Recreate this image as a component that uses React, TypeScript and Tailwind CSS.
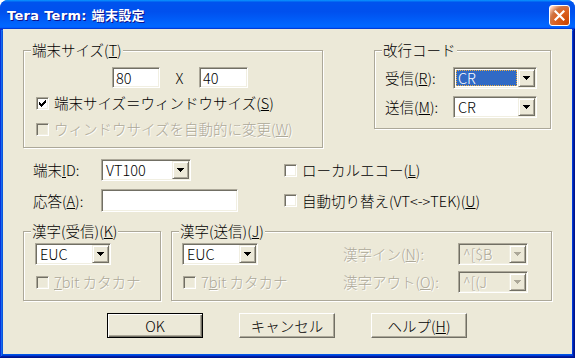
import type { ReactNode } from "react"

const sunken =
  "border border-t-[#aca899] border-l-[#aca899] border-r-white border-b-white shadow-[inset_1px_1px_0_#716f64,inset_-1px_-1px_0_#f1efe2]"
const raised =
  "border border-t-[#f1efe2] border-l-[#f1efe2] border-r-[#716f64] border-b-[#716f64] shadow-[inset_1px_1px_0_#fff,inset_-1px_-1px_0_#aca899]"
const dim = "text-[#aca899] [text-shadow:1px_1px_0_#fff]"

function Combo({
  value,
  width,
  selected,
  disabled,
}: {
  value: string
  width: string
  selected?: boolean
  disabled?: boolean
}) {
  return (
    <div className={`flex h-[22px] p-[1px] ${width} ${sunken} ${disabled ? "bg-[#ece9d8]" : "bg-white"}`}>
      <div className="flex flex-1 p-[1px]">
        {selected ? (
          <span className="flex flex-1 items-center border border-dotted border-[#f0b040] bg-[#316ac5] pl-[1px] text-white">
            {value}
          </span>
        ) : (
          <span className={`flex flex-1 items-center pl-[2px] ${disabled ? dim : ""}`}>{value}</span>
        )}
      </div>
      <div className={`flex w-[17px] items-center justify-center bg-[#ece9d8] ${raised}`}>
        <svg width="7" height="4" viewBox="0 0 7 4" shapeRendering="crispEdges">
          <path d="M0 0h7v1h-7zM1 1h5v1h-5zM2 2h3v1h-3zM3 3h1v1h-1z" fill={disabled ? "#aca899" : "#000"} />
        </svg>
      </div>
    </div>
  )
}

function Edit({ value, width }: { value?: string; width: string }) {
  return (
    <div className={`flex h-[21px] items-center bg-white pl-[3px] ${width} ${sunken}`}>{value}</div>
  )
}

function Check({ checked, disabled, children }: { checked?: boolean; disabled?: boolean; children: ReactNode }) {
  return (
    <div className="flex h-[26px] items-center gap-[5px] whitespace-nowrap">
      <span
        className={`flex h-[13px] w-[13px] shrink-0 items-center justify-center ${sunken} ${
          disabled ? "bg-[#ece9d8]" : "bg-white"
        }`}
      >
        {checked && (
          <svg width="7" height="7" viewBox="0 0 7 7" shapeRendering="crispEdges">
            <path
              d="M6 0h1v1h-1zM5 1h2v1h-2zM0 2h1v1h-1zM4 2h3v1h-3zM0 3h2v1h-2zM3 3h3v1h-3zM0 4h5v1h-5zM1 5h3v1h-3zM2 6h1v1h-1z"
              fill="#000"
            />
          </svg>
        )}
      </span>
      <span className={disabled ? dim : ""}>{children}</span>
    </div>
  )
}

function Group({ label, className, children }: { label: ReactNode; className: string; children: ReactNode }) {
  return (
    <div className={`relative border border-[#aca899] shadow-[inset_1px_1px_0_#fff,1px_1px_0_#fff] ${className}`}>
      <span className="absolute -top-[9px] left-[7px] whitespace-nowrap bg-[#ece9d8] px-[1px] leading-[16px]">
        {label}
      </span>
      {children}
    </div>
  )
}

function Btn({ children, primary }: { children: ReactNode; primary?: boolean }) {
  return (
    <div
      className={`flex h-[25px] w-[96px] items-center justify-center ${
        primary
          ? "border border-black shadow-[inset_1px_1px_0_#fff,inset_-1px_-1px_0_#716f64,inset_-2px_-2px_0_#aca899]"
          : "border border-t-white border-l-white border-r-[#716f64] border-b-[#716f64] shadow-[inset_-1px_-1px_0_#aca899]"
      }`}
    >
      {children}
    </div>
  )
}

export default function App() {
  return (
    <div className="h-[358px] w-[575px] bg-white">
      <div className="flex h-full w-full flex-col overflow-hidden rounded-t-[8px] bg-[#0054e3]">
        {/* title bar */}
        <div className="flex h-[29px] shrink-0 items-center justify-between bg-[linear-gradient(180deg,#0997ff,#0053ee_8%,#0050ee_40%,#0066ff_88%,#0066ff_93%,#005bff_95%,#003dd7_96%,#003dd7)] pl-[7px] pr-[5px] pt-[2px]">
          <span className="font-['DejaVu_Sans','Noto_Sans_CJK_JP',sans-serif] text-[13px] font-bold tracking-[0.3px] text-white [text-shadow:1px_1px_#0f1089]">
            Tera Term: 端末設定
          </span>
          <div className="flex h-[21px] w-[21px] items-center justify-center rounded-[3px] border border-white bg-[radial-gradient(circle_at_90%_90%,#cc4600_0%,#dc6527_55%,#cd7546_70%,#ffccb2_90%,#ffffff_100%)]">
            <svg width="11" height="11" viewBox="0 0 11 11">
              <path d="M1.5 1.5l8 8M9.5 1.5l-8 8" stroke="#fff" strokeWidth="2.2" strokeLinecap="square" />
            </svg>
          </div>
        </div>

        {/* frame + body */}
        <div className="flex flex-1 flex-col px-[3px] pb-[4px] shadow-[inset_-1px_-1px_#00138c,inset_1px_1px_#0831d9,inset_-2px_-2px_#001ea0,inset_2px_2px_#166aee,inset_-3px_-3px_#003bda,inset_3px_3px_#0855dd]">
          <div className="flex-1 bg-[#ece9d8] pl-[20px] pt-[21px] font-['Noto_Sans_CJK_JP',sans-serif] text-[14.5px] font-light leading-[16px] text-black">
            <div className="flex">
              <Group
                className="h-[98px] w-[300px] pt-[16px]"
                label={
                  <>
                    端末サイズ(<u>T</u>)
                  </>
                }
              >
                <div className="ml-[88px] flex items-center">
                  <Edit value="80" width="w-[48px]" />
                  <span className="w-[39px] text-center">X</span>
                  <Edit value="40" width="w-[49px]" />
                </div>
                <div className="mt-[2px] pl-[12px]">
                  <Check checked>
                    端末サイズ＝ウィンドウサイズ(<u>S</u>)
                  </Check>
                  <Check disabled>
                    ウィンドウサイズを自動的に変更(<u>W</u>)
                  </Check>
                </div>
              </Group>

              <Group className="ml-[51px] h-[79px] w-[177px] pt-[16px]" label="改行コード">
                <div className="flex h-[22px] items-center">
                  <span className="w-[78px] pl-[10px]">
                    受信(<u>R</u>):
                  </span>
                  <Combo value="CR" width="w-[84px]" selected />
                </div>
                <div className="mt-[7px] flex h-[22px] items-center">
                  <span className="w-[78px] pl-[10px]">
                    送信(<u>M</u>):
                  </span>
                  <Combo value="CR" width="w-[84px]" />
                </div>
              </Group>
            </div>

            <div className="mt-[11px] flex h-[22px] items-center">
              <div className="flex w-[261px] items-center">
                <span className="w-[78px] pl-[10px]">
                  端末<u>I</u>D:
                </span>
                <Combo value="VT100" width="w-[90px]" />
              </div>
              <Check>
                ローカルエコー(<u>L</u>)
              </Check>
            </div>

            <div className="mt-[8px] flex h-[23px] items-center">
              <div className="flex w-[261px] items-center">
                <span className="w-[78px] pl-[10px]">
                  応答(<u>A</u>):
                </span>
                <Edit width="w-[137px] h-[23px]" />
              </div>
              <Check>
                自動切り替え(VT&lt;-&gt;TEK)(<u>U</u>)
              </Check>
            </div>

            <div className="mt-[19px] flex">
              <Group
                className="h-[70px] w-[138px] pt-[11px]"
                label={
                  <>
                    漢字(受信)(<u>K</u>)
                  </>
                }
              >
                <div className="ml-[11px]">
                  <Combo value="EUC" width="w-[76px]" />
                  <div className="mt-[4px] pl-[1px]">
                    <Check disabled>
                      <u>7</u>bit カタカナ
                    </Check>
                  </div>
                </div>
              </Group>

              <Group
                className="ml-[10px] flex h-[70px] w-[381px] pt-[11px]"
                label={
                  <>
                    漢字(送信)(<u>J</u>)
                  </>
                }
              >
                <div className="ml-[10px] w-[76px] shrink-0">
                  <Combo value="EUC" width="w-[76px]" />
                  <div className="mt-[4px] pl-[1px]">
                    <Check disabled>
                      7<u>b</u>it カタカナ
                    </Check>
                  </div>
                </div>
                <div className="ml-[85px]">
                  <div className="flex h-[22px] items-center">
                    <span className={`w-[115px] whitespace-nowrap ${dim}`}>
                      漢字イン(<u>N</u>):
                    </span>
                    <Combo value="^[$B" width="w-[70px]" disabled />
                  </div>
                  <div className="mt-[6px] flex h-[22px] items-center">
                    <span className={`w-[115px] whitespace-nowrap ${dim}`}>
                      漢字アウト(<u>O</u>):
                    </span>
                    <Combo value="^[(J" width="w-[70px]" disabled />
                  </div>
                </div>
              </Group>
            </div>

            <div className="mt-[12px] flex gap-[36px] pl-[84px]">
              <Btn primary>OK</Btn>
              <Btn>キャンセル</Btn>
              <Btn>
                ヘルプ(<u>H</u>)
              </Btn>
            </div>
          </div>
        </div>
      </div>
    </div>
  )
}
